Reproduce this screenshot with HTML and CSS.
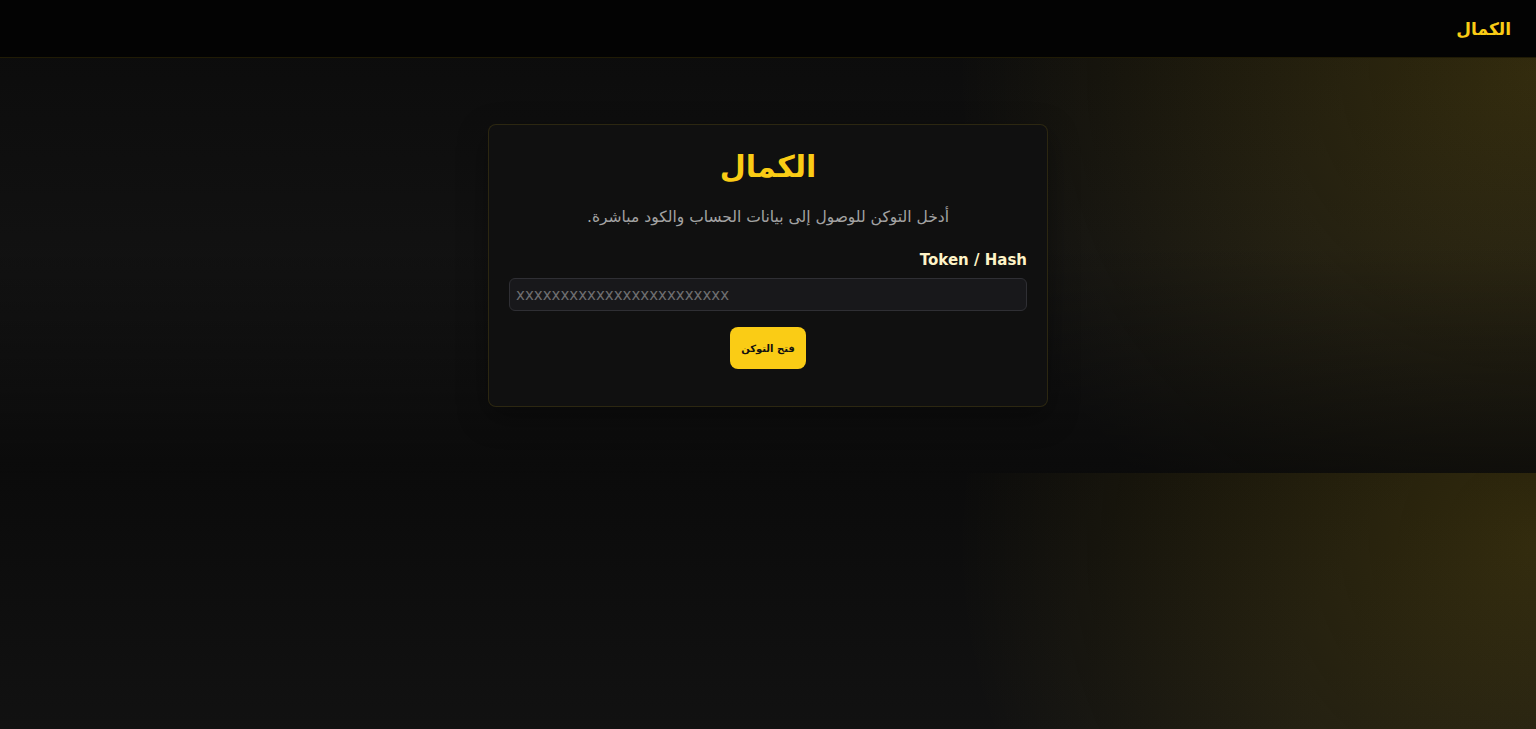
FILE: index.html
```html
<!DOCTYPE html>
<html lang="ar" dir="rtl">
<head>
<meta charset="utf-8">
<title>الكمال</title>
<link rel="stylesheet" href="styles.css">
</head>
<body>
<header class="topbar">
  <a class="brand" href="#">الكمال</a>
</header>
<main class="hero">
  <section class="card">
    <h1 class="card-title">الكمال</h1>
    <p class="card-lead">أدخل التوكن للوصول إلى بيانات الحساب والكود مباشرة.</p>
    <form class="token-form">
      <label class="field-label" for="token">Token / Hash</label>
      <input class="field-input" id="token" type="text" dir="ltr" placeholder="xxxxxxxxxxxxxxxxxxxxxxxx">
      <div class="actions">
        <button class="btn-primary" type="button">فتح التوكن</button>
      </div>
    </form>
  </section>
</main>
</body>
</html>
```

FILE: styles.css
```css
* {
  box-sizing: border-box;
}

body {
  margin: 0;
  font-family: "DejaVu Sans", "Noto Sans", sans-serif;
  color: #e5e5e5;
  background:
    radial-gradient(ellipse 580px 560px at 100% 15%, rgba(250, 204, 21, 0.16), rgba(250, 204, 21, 0.075) 55%, transparent 100%),
    linear-gradient(180deg, #0b0b0b 0%, #171717 100%);
}

.topbar {
  height: 58px;
  display: flex;
  align-items: center;
  padding: 0 25px;
  background: #030303;
  border-bottom: 1px solid rgba(250, 204, 21, 0.12);
}

.brand {
  color: #facc15;
  font-weight: 700;
  font-size: 17px;
  text-decoration: none;
}

.hero {
  display: flex;
  justify-content: center;
  padding: 66px 16px;
  background: linear-gradient(180deg, transparent 45%, rgba(0, 0, 0, 0.55) 100%);
}

.card {
  width: 560px;
  padding: 20px 20px 37px;
  background: #101010;
  border: 1px solid rgba(250, 204, 21, 0.12);
  border-radius: 8px;
  box-shadow: 0 10px 30px rgba(0, 0, 0, 0.35);
}

.card-title {
  margin: 1px 0 0;
  text-align: center;
  color: #facc15;
  font-size: 30px;
  font-weight: 700;
  line-height: 1.4;
}

.card-lead {
  margin: 17px 0 0;
  text-align: center;
  color: #a3a3a3;
  font-size: 15.5px;
  line-height: 1.6;
}

.token-form {
  display: flex;
  flex-direction: column;
  margin-top: 21px;
}

.field-label {
  color: #fef3c7;
  font-weight: 700;
  font-size: 15px;
  line-height: 1.3;
  margin-bottom: 8px;
}

.field-input {
  height: 33px;
  padding: 0 6px;
  background: #18181b;
  border: 1px solid #2f2f34;
  border-radius: 6px;
  color: #e5e5e5;
  font-family: "DejaVu Sans", sans-serif;
  font-size: 15px;
  text-align: left;
}

.field-input::placeholder {
  color: #6e6e70;
}

.actions {
  display: flex;
  justify-content: center;
  margin-top: 16px;
}

.btn-primary {
  height: 42px;
  padding: 0 11px;
  background: #facc15;
  color: #111;
  border: 0;
  border-radius: 8px;
  font-family: "DejaVu Sans", sans-serif;
  font-size: 10px;
  font-weight: 700;
}
```
